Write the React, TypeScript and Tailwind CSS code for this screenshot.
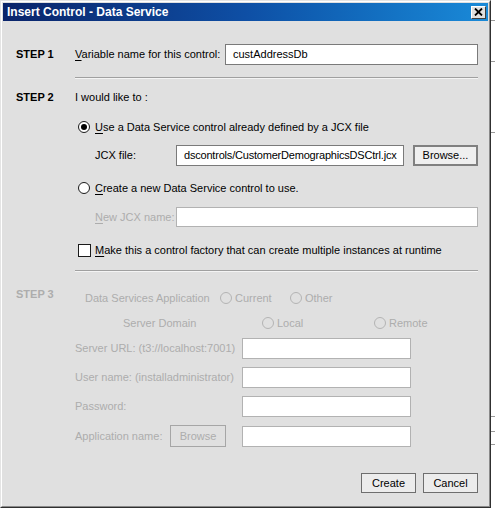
import React from 'react';

const font = { fontFamily: '"Liberation Sans", Arial, sans-serif' };

function Radio({ checked, disabled }: { checked?: boolean; disabled?: boolean }) {
  return (
    <span
      className={
        'flex items-center justify-center w-[12px] h-[12px] rounded-full shrink-0 ' +
        (disabled ? 'border border-[#b4b4b4]' : 'border border-[#1a1a1a] bg-white')
      }
    >
      {checked && <span className="w-[6px] h-[6px] rounded-full bg-black" />}
    </span>
  );
}

function Input({ w, value, disabled, tight }: { w: string; value?: string; disabled?: boolean; tight?: boolean }) {
  return (
    <div
      className={
        'h-full bg-white border flex items-center px-[7px] text-black overflow-hidden whitespace-nowrap ' +
        w +
        (disabled ? ' border-[#b2b2b2]' : ' border-[#7a7a7a]') +
        (tight ? ' tracking-[-0.2px]' : '')
      }
    >
      {value}
    </div>
  );
}

function Separator() {
  return (
    <div className="ml-[59px] w-[403px] flex flex-col">
      <div className="h-px bg-[#a0a0a0]" />
      <div className="h-px bg-[#f4f4f4]" />
    </div>
  );
}

export default function App() {
  return (
    <div className="w-[495px] h-[510px] bg-white overflow-hidden text-[11px] text-black flex" style={font}>
      <div className="w-[491px] h-[508px] shrink-0 border-l border-t border-[#e4e4e4] border-r border-b border-r-[#303030] border-b-[#303030]">
        <div className="w-full h-full border-l border-t border-white border-r border-b border-r-[#8a8a8a] border-b-[#8a8a8a] p-px bg-[#e0e0e0] flex flex-col">
          {/* title bar */}
          <div className="h-[18px] shrink-0 bg-gradient-to-r from-[#0a246a] via-[#0e4fa5] to-[#1a8ad8] flex items-center justify-between pl-[4px] pr-[2px]">
            <span className="text-white font-bold text-[12px] leading-none">Insert Control - Data Service</span>
            <div className="w-[15px] h-[13px] bg-[#e0e0e0] border-l border-t border-white border-r border-b border-r-[#404040] border-b-[#404040] flex items-center justify-center">
              <svg width="9" height="8" viewBox="0 0 9 8">
                <path d="M1 0.5 L8 7.5 M8 0.5 L1 7.5" stroke="#000" strokeWidth="1.8" />
              </svg>
            </div>
          </div>

          <div className="flex flex-col pl-[13px] pr-[10px] leading-none">
            {/* step 1 */}
            <div className="mt-[23px] h-[21px] flex items-center">
              <span className="w-[59px] font-bold">STEP 1</span>
              <span className="w-[150px]">
                <span className="underline underline-offset-2">V</span>ariable name for this control:
              </span>
              <Input w="w-[253px]" value="custAddressDb" />
            </div>

            <div className="mt-[12px]">
              <Separator />
            </div>

            {/* step 2 */}
            <div className="mt-[8px] h-[20px] flex items-center">
              <span className="w-[59px] font-bold">STEP 2</span>
              <span>I would like to :</span>
            </div>

            <div className="mt-[10px] h-[20px] flex items-center pl-[62px] gap-[5px]">
              <Radio checked />
              <span>
                <span className="underline underline-offset-2">U</span>se a Data Service control already defined by a JCX file
              </span>
            </div>

            <div className="mt-[8px] h-[21px] flex items-center pl-[79px]">
              <span className="w-[81px]">JCX file:</span>
              <Input w="w-[228px]" value="dscontrols/CustomerDemographicsDSCtrl.jcx" tight />
              <div className="ml-[9px] w-[65px] h-full border-2 border-[#808080] bg-[#efefef] flex items-center justify-center">
                Browse...
              </div>
            </div>

            <div className="mt-[12px] h-[20px] flex items-center pl-[62px] gap-[5px]">
              <Radio />
              <span>
                <span className="underline underline-offset-2">C</span>reate a new Data Service control to use.
              </span>
            </div>

            <div className="mt-[9px] h-[20px] flex items-center pl-[79px] text-[#adadad]">
              <span className="w-[81px]">
                <span className="underline underline-offset-2">N</span>ew JCX name:
              </span>
              <Input w="w-[302px]" disabled />
            </div>

            <div className="mt-[13px] h-[20px] flex items-center pl-[62px] gap-[4px]">
              <span className="w-[13px] h-[13px] border border-[#1a1a1a] bg-white shrink-0" />
              <span>
                <span className="underline underline-offset-2">M</span>ake this a control factory that can create multiple instances at runtime
              </span>
            </div>

            <div className="mt-[10px]">
              <Separator />
            </div>

            {/* step 3 (disabled) */}
            <div className="text-[#adadad] flex flex-col">
              <div className="mt-[16px] h-[20px] flex items-center">
                <span className="w-[59px] font-bold self-start mt-[1px]">STEP 3</span>
                <span className="ml-[10px] w-[135px]">Data Services Application</span>
                <span className="w-[70px] flex items-center gap-[3px]">
                  <Radio disabled />
                  Current
                </span>
                <span className="flex items-center gap-[3px]">
                  <Radio disabled />
                  Other
                </span>
              </div>

              <div className="mt-[5px] h-[20px] flex items-center pl-[107px]">
                <span className="w-[139px]">Server Domain</span>
                <span className="w-[112px] flex items-center gap-[3px]">
                  <Radio disabled />
                  Local
                </span>
                <span className="flex items-center gap-[3px]">
                  <Radio disabled />
                  Remote
                </span>
              </div>

              <div className="mt-[5px] h-[21px] flex items-center pl-[59px]">
                <span className="w-[167px]">Server URL: (t3://localhost:7001)</span>
                <Input w="w-[169px]" disabled />
              </div>

              <div className="mt-[8px] h-[21px] flex items-center pl-[59px]">
                <span className="w-[167px]">User name: (installadministrator)</span>
                <Input w="w-[169px]" disabled />
              </div>

              <div className="mt-[8px] h-[21px] flex items-center pl-[59px]">
                <span className="w-[167px]">Password:</span>
                <Input w="w-[169px]" disabled />
              </div>

              <div className="mt-[8px] h-[22px] flex items-center pl-[59px]">
                <span className="w-[95px]">Application name:</span>
                <div className="w-[56px] h-full border border-[#a6a6a6] flex items-center justify-center">Browse</div>
                <div className="ml-[16px] h-[21px] w-[169px] bg-white border border-[#b2b2b2]" />
              </div>
            </div>

            {/* buttons */}
            <div className="mt-[26px] h-[20px] flex justify-end gap-[7px]">
              <div className="w-[55px] h-full border border-[#6e6e6e] bg-[#ececec] flex items-center justify-center">Create</div>
              <div className="w-[55px] h-full border border-[#6e6e6e] bg-[#ececec] flex items-center justify-center">Cancel</div>
            </div>
          </div>
        </div>
      </div>

      {/* window behind the dialog */}
      <div className="flex-1 flex flex-col bg-white">
        <div className="mt-[20px] h-px bg-[#9a9a9a]" />
        <div className="mt-[40px] h-px bg-[#9a9a9a]" />
        <div className="mt-[70px] h-px bg-[#9a9a9a]" />
        <div className="mt-[283px] h-px bg-[#9a9a9a]" />
        <div className="mt-[14px] h-px bg-[#9a9a9a]" />
        <div className="mt-[12px] h-px bg-[#9a9a9a]" />
      </div>
    </div>
  );
}
